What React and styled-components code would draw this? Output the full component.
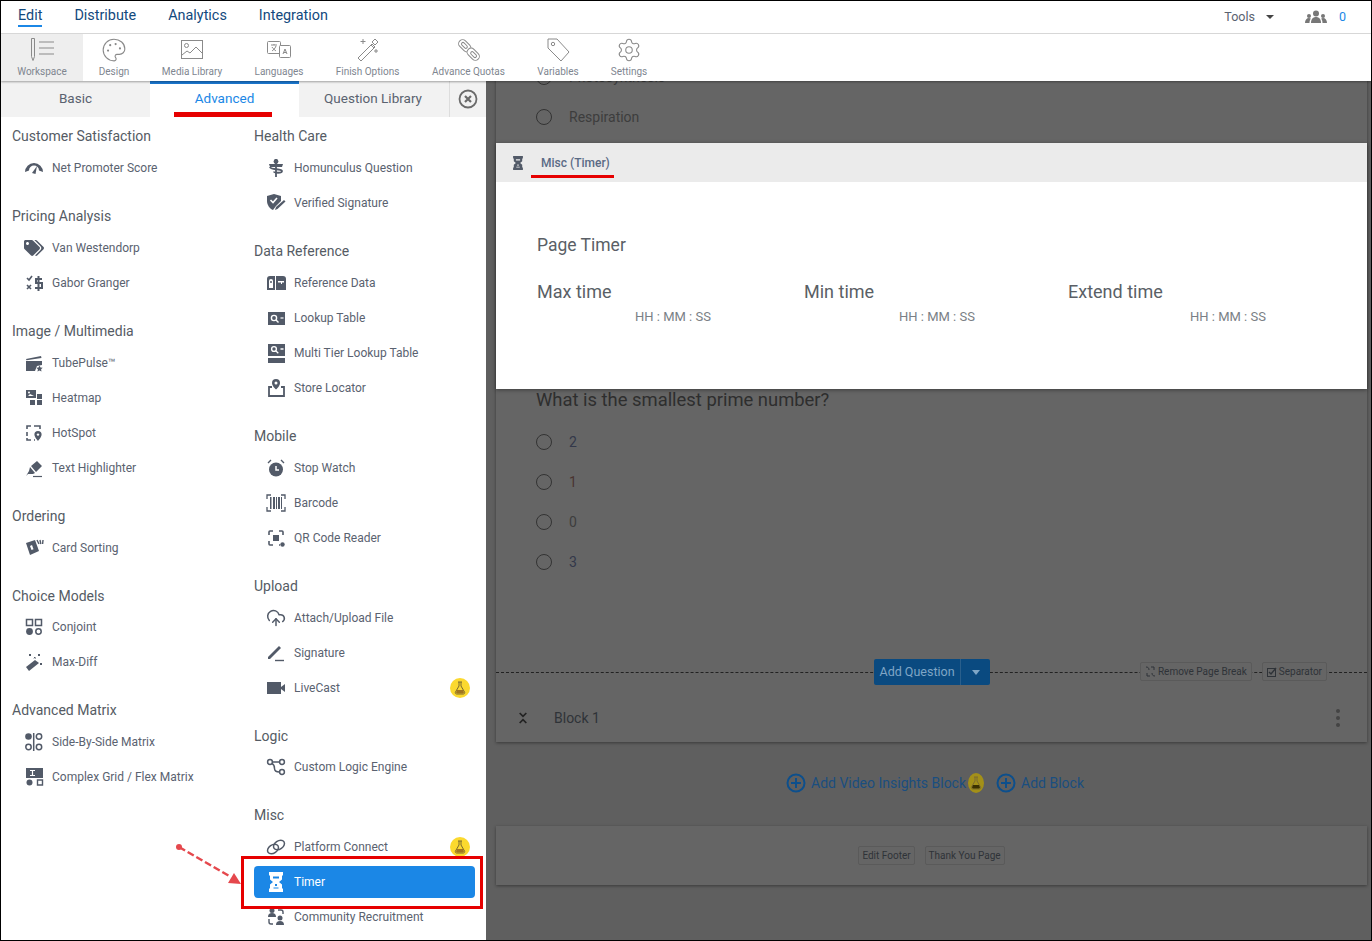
import React from "react";
import styled, { createGlobalStyle } from "styled-components";
import { Palette, Settings, CloudUpload } from "lucide-react";
import { FaTags } from "react-icons/fa";

const GlobalStyle = createGlobalStyle`
  html, body { margin: 0; padding: 0; height: 100%; background: #fff; }
  * { box-sizing: border-box; }
  body { font-family: Roboto, "Open Sans", sans-serif; }
`;

const Frame = styled.div`
  width: 1372px;
  height: 941px;
  border: 1px solid #000;
  display: flex;
  flex-direction: column;
  overflow: hidden;
`;

const TopBar = styled.div`
  height: 33px;
  flex: none;
  display: flex;
  align-items: center;
  padding: 0 25px 4px 17px;
  border-bottom: 1px solid #ddd;
`;

const NavLink = styled.a`
  position: relative;
  font-size: 14.4px;
  color: #12497d;
  margin-right: 32px;
  ${(p) => p.$active && `
    &::after {
      content: "";
      position: absolute;
      left: 0;
      right: 0;
      bottom: -3px;
      height: 2px;
      background: #1b87e6;
    }
  `}
`;

const TopRight = styled.div`
  margin-left: auto;
  display: flex;
  align-items: center;
  padding-top: 3px;
  font-size: 12.5px;
  color: #5a6270;
`;

const Caret = styled.span`
  width: 0;
  height: 0;
  margin: 0 31px 0 11px;
  border-left: 4px solid transparent;
  border-right: 4px solid transparent;
  border-top: 4px solid #444;
`;

const Count = styled.span`
  margin-left: 12px;
  color: #1b87e6;
`;

const Toolbar = styled.div`
  height: 47px;
  flex: none;
  display: flex;
  position: relative;
  z-index: 2;
  background: #fff;
  box-shadow: 0 1px 2px rgba(0, 0, 0, 0.35);
`;

const ToolButton = styled.div`
  width: ${(p) => p.$w}px;
  display: flex;
  flex-direction: column;
  align-items: center;
  padding-top: 3px;
  font-size: 10px;
  line-height: 13px;
  color: #808690;
  white-space: nowrap;
  background: ${(p) => (p.$active ? "#eee" : "transparent")};
  svg { display: block; height: 26px; width: 26px; margin-bottom: 2px; }
`;

const Body = styled.div`
  flex: 1;
  min-height: 0;
  display: flex;
`;

const Sidebar = styled.aside`
  position: relative;
  width: 485px;
  flex: none;
  background: #fff;
  overflow: hidden;
`;

const Tabs = styled.div`
  height: 36px;
  display: flex;
  background: #f2f2f2;
`;

const Tab = styled.div`
  width: ${(p) => p.$w}px;
  display: flex;
  align-items: center;
  justify-content: center;
  padding-bottom: 6px;
  font-size: 13.5px;
  color: ${(p) => (p.$active ? "#1b87e6" : "#5a6270")};
  background: ${(p) => (p.$active ? "#fff" : "transparent")};
  border-top: 3px solid ${(p) => (p.$active ? "#1b78d0" : "transparent")};
`;

const CloseTab = styled.div`
  flex: 1;
  display: flex;
  align-items: center;
  justify-content: center;
  margin-left: 2px;
  border-left: 1px solid #ddd;
`;

const Columns = styled.div`
  display: grid;
  grid-template-columns: 221px 221px;
  column-gap: 21px;
  padding: 3px 0 0 11px;
`;

const Section = styled.section`
  padding-bottom: 13px;
`;

const Heading = styled.h3`
  margin: 0;
  height: ${(p) => (p.$tight ? 31 : 32)}px;
  line-height: 32px;
  font-size: 14px;
  font-weight: 400;
  color: #555b64;
`;

const Item = styled.div`
  height: 32px;
  margin-bottom: 3px;
  display: flex;
  align-items: center;
  padding: 0 5px 0 12px;
  border-radius: 4px;
  font-size: 12px;
  white-space: nowrap;
  color: ${(p) => (p.$active ? "#fff" : "#5a6270")};
  background: ${(p) => (p.$active ? "#1b87e6" : "transparent")};
  svg.ic { width: 20px; height: 20px; flex: none; margin-right: 8px; }
`;

const Badge = styled.span`
  margin-left: auto;
  width: 20px;
  height: 20px;
  border-radius: 50%;
  background: #fbd92f;
  display: flex;
  align-items: center;
  justify-content: center;
`;

const Highlight = styled.div`
  position: absolute;
  left: 240px;
  top: 775px;
  width: 242px;
  height: 53px;
  border: 3px solid #e60000;
`;

const TabUnderline = styled.div`
  position: absolute;
  left: 173px;
  top: 31px;
  width: 98px;
  height: 5px;
  background: #e60000;
`;

const ArrowMark = styled.svg`
  position: absolute;
  left: 170px;
  top: 755px;
`;

const Main = styled.main`
  position: relative;
  flex: 1;
  min-width: 0;
  overflow: hidden;
  background: #5f5f5f;
  padding: 0 4px 0 10px;
`;

const SurveyCard = styled.div`
  margin-top: -24px;
  height: 685px;
  background: #656565;
  box-shadow: 0 1px 3px rgba(0, 0, 0, 0.4);
`;

const Option = styled.div`
  height: 40px;
  display: flex;
  align-items: center;
  padding-left: 40px;
  font-size: 14px;
  color: ${(p) => p.$color || "#3d3d3d"};
`;

const Radio = styled.span`
  width: 16px;
  height: 16px;
  margin-right: 17px;
  border: 1px solid #333;
  border-radius: 50%;
`;

const Question = styled.h2`
  margin: 250px 0 9px;
  padding-left: 40px;
  height: 26px;
  line-height: 26px;
  font-size: 18.4px;
  font-weight: 400;
  color: #2e2e2e;
`;

const BreakRow = styled.div`
  position: relative;
  height: 26px;
  margin-top: 77px;
  display: flex;
  justify-content: center;
  &::before {
    content: "";
    position: absolute;
    left: 0;
    right: 0;
    top: 13px;
    border-top: 1px dashed #222;
  }
`;

const AddQuestion = styled.div`
  position: relative;
  width: 116px;
  display: flex;
  align-items: center;
  border-radius: 2px;
  background: #0a4a80;
  color: #7fa6c6;
  font-size: 12.5px;
`;

const AddLabel = styled.span`
  padding-left: 6px;
  width: 87px;
  height: 100%;
  line-height: 26px;
  border-right: 1px solid #2a5f8c;
`;

const AddCaret = styled.span`
  margin-left: 11px;
  border-left: 4px solid transparent;
  border-right: 4px solid transparent;
  border-top: 5px solid #7fa6c6;
`;

const BreakTools = styled.div`
  position: absolute;
  right: 40px;
  top: 3px;
  display: flex;
  gap: 10px;
`;

const GhostButton = styled.span`
  height: 19px;
  display: flex;
  align-items: center;
  gap: 2px;
  padding: 0 ${(p) => (p.$small ? 3 : 4)}px;
  background: #656565;
  border: 1px solid #5a5a5a;
  border-radius: 2px;
  font-size: 10px;
  color: #2f3338;
`;

const BlockRow = styled.div`
  height: 48px;
  margin-top: 9px;
  display: flex;
  align-items: center;
  padding: 0 27px 0 22px;
  font-size: 14px;
  color: #2f3338;
`;

const BlockTitle = styled.span`
  margin-left: 26px;
`;

const Kebab = styled.span`
  margin-left: auto;
  display: flex;
  flex-direction: column;
  gap: 3px;
  i { width: 4px; height: 4px; border-radius: 50%; background: #444; }
`;

const AddRow = styled.div`
  height: 30px;
  margin-top: 26px;
  padding-left: 290px;
  display: flex;
  align-items: center;
  font-size: 14px;
  color: #1a4e80;
`;

const AddBlock = styled.span`
  display: flex;
  align-items: center;
  gap: 5px;
  margin-left: ${(p) => p.$ml || 0}px;
`;

const MiniBadge = styled(Badge)`
  margin-left: 2px;
  width: 16px;
  height: 20px;
  background: #a39018;
`;

const FooterCard = styled.div`
  height: 59px;
  margin-top: 28px;
  background: #656565;
  box-shadow: 0 1px 3px rgba(0, 0, 0, 0.4);
  display: flex;
  justify-content: center;
  align-items: center;
  gap: 10px;
`;

const TimerCard = styled.section`
  position: absolute;
  top: 62px;
  left: 10px;
  right: 4px;
  height: 246px;
  background: #fff;
  box-shadow: 0 1px 4px rgba(0, 0, 0, 0.4);
`;

const TimerHead = styled.header`
  position: relative;
  height: 39px;
  display: flex;
  align-items: center;
  padding-left: 15px;
  background: #ebebeb;
  font-size: 12px;
  font-weight: 500;
  color: #5a6a85;
  svg { width: 14px; height: 18px; margin-right: 16px; }
`;

const HeadUnderline = styled.div`
  position: absolute;
  left: 35px;
  bottom: 4px;
  width: 83px;
  height: 3px;
  background: #e60000;
`;

const TimerBody = styled.div`
  padding: 51px 0 0 41px;
`;

const PageTitle = styled.div`
  height: 24px;
  line-height: 24px;
  font-size: 17.5px;
  color: #5a5f66;
`;

const Fields = styled.div`
  margin-top: 23px;
  display: grid;
  grid-template-columns: 267px 264px 1fr;
`;

const FieldLabel = styled.div`
  height: 24px;
  line-height: 24px;
  font-size: 18px;
  color: #5a5f66;
`;

const FieldValue = styled.div`
  margin-top: 4px;
  height: 18px;
  line-height: 18px;
  padding-left: ${(p) => p.$indent}px;
  font-size: 13px;
  color: #7a7f86;
`;

const D = "#525a68";

const icons = {
  gauge: (<><path d="M1 14a9 9 0 0 1 18 0l-4-1.500a5 5 0 0 0-10 0z" fill={D} /><path d="M8 15l5-7-1.500 8z" fill={D} /></>),
  gabor: (<><path d="M3 5l2 2 3-4M3 12l4 4M7 12l-4 4" stroke={D} strokeWidth="1.600" fill="none" /><path d="M18 6h-6v4h6v5h-7M14.500 3v15" stroke={D} strokeWidth="2" fill="none" /></>),
  clapper: (<><path d="M2 8h16v4l-5 1-2 5H2z" fill={D} /><path d="M2 6l15-3 .5 2-15 2.200z" fill={D} /><path d="M15.500 12.500l1 2 2.200.3-1.600 1.500.4 2.200-2-1-2 1 .4-2.200-1.600-1.500 2.200-.3z" fill={D} /></>),
  heatmap: (<><path d="M2 2h10v8H2z" fill={D} /><path d="M4 8l2-2 2 1 2 1H4z" fill="#fff" /><circle cx="5" cy="4.500" r="1" fill="#fff" /><path d="M13 6h5v5h-5zM6 12h5v5H6zM13 12h5v5h-5z" fill={D} /></>),
  hotspot: (<><path d="M3 6V3h4M10 3h6v3M3 9v4M3 15v2h4M10 17h1" stroke={D} strokeWidth="1.600" fill="none" /><path d="M14 8a3.600 3.600 0 0 1 3.600 3.600c0 2.600-3.600 6.400-3.600 6.400s-3.600-3.800-3.600-6.400A3.600 3.600 0 0 1 14 8z" fill={D} /><circle cx="14" cy="11.600" r="1.200" fill="#fff" /></>),
  highlight: (<><path d="M7 8l6-5 5 5-6 6zM6 9l5 6-2 1H4l-2 2 3-5z" fill={D} /><path d="M9 18.500h9" stroke={D} strokeWidth="1.200" /></>),
  cards: (<><path d="M2 5l9-3 4 11-9 4z" fill={D} /><path d="M8 7l-2 1 1.500 4 2-.8z" fill="#fff" /><path d="M13 2l2 4M16 2l.8 4M19 2l-.4 4" stroke={D} strokeWidth="1.400" /></>),
  conjoint: (<><path d="M2.500 2.500h6v6h-6zM11.500 2.500h6v6h-6z" stroke={D} strokeWidth="1.500" fill="none" /><circle cx="5.500" cy="14.500" r="3.400" fill={D} /><circle cx="14.500" cy="14.500" r="2.700" stroke={D} strokeWidth="1.500" fill="none" /></>),
  maxdiff: (<><path d="M2 15l9-7 4 3-10 8z" fill={D} /><path d="M5 2l2 2M7 2L5 4M14 2l2 2M16 2l-2 2M16 11l2 2M18 11l-2 2M10 5l1.500 1.500M11.500 5L10 6.500" stroke={D} strokeWidth="1" /></>),
  sidebyside: (<><circle cx="4.500" cy="4.500" r="3.300" fill={D} /><circle cx="15" cy="4.500" r="2.700" stroke={D} strokeWidth="1.500" fill="none" /><circle cx="4.500" cy="15" r="2.700" stroke={D} strokeWidth="1.500" fill="none" /><circle cx="15" cy="15" r="2.700" stroke={D} strokeWidth="1.500" fill="none" /><path d="M9.700 1v18" stroke={D} strokeWidth="1.500" /></>),
  grid: (<><path d="M2 1h17v10H2z" fill={D} /><path d="M6 3.500h5M6 8.500h5M8.500 3.500v5" stroke="#fff" strokeWidth="1.200" /><circle cx="5.500" cy="15.500" r="3" fill={D} /><path d="M13.500 13h5v5h-5z" stroke={D} strokeWidth="1.400" fill="none" /></>),
  caduceus: (<><path d="M10 1v18" stroke={D} strokeWidth="1.800" /><path d="M3 6h14l-1 3H4z" fill={D} /><path d="M4 9c0 3 12 1.500 12 4s-8 2-8 .5" stroke={D} strokeWidth="1.800" fill="none" /><circle cx="10" cy="3.500" r="2.400" fill={D} /></>),
  shieldpen: (<><path d="M1 3l7-2 7 2v5l-5 5-3 4C4 16 1 12 1 8z" fill={D} /><path d="M4.500 7l2.500 2.500L11 5" stroke="#fff" strokeWidth="1.600" fill="none" /><path d="M9 17l1-3 8-7 1.500 1.500-8 7.500z" fill={D} /></>),
  refdata: (<><path d="M1 17V6a3 3 0 0 1 3-3h5v14z" fill={D} /><path d="M10 3h7a3 3 0 0 1 3 3v11H10z" fill={D} /><path d="M3 15V8a2 2 0 0 1 4 0v7z" fill="#fff" /><circle cx="5" cy="9" r="1" fill={D} /><path d="M12 8h6v1.500h-2V11h-1V9.500h-3z" fill="#fff" /></>),
  lookup: (<><path d="M2 4h17v13H2z" fill={D} /><circle cx="8" cy="10" r="2.600" stroke="#fff" strokeWidth="1.400" fill="none" /><path d="M10 12l2.500 2.500" stroke="#fff" strokeWidth="1.400" /><path d="M14.500 10h3" stroke="#fff" strokeWidth="1.200" /></>),
  multi: (<><path d="M2 1h17v12H2z" fill={D} /><circle cx="8" cy="6" r="2.400" stroke="#fff" strokeWidth="1.400" fill="none" /><path d="M10 8l2.300 2.300M14.500 6h3" stroke="#fff" strokeWidth="1.300" /><path d="M2 15h17v5H2z" fill={D} /></>),
  locator: (<><path d="M10 1a4 4 0 0 1 4 4c0 3-4 6.500-4 6.500S6 8 6 5a4 4 0 0 1 4-4z" fill={D} /><circle cx="10" cy="5" r="1.500" fill="#fff" /><path d="M6 9H3v9h15V9h-3" stroke={D} strokeWidth="1.800" fill="none" /></>),
  alarm: (<><circle cx="10" cy="11.500" r="7" fill={D} /><path d="M10 8v4h3" stroke="#fff" strokeWidth="1.500" fill="none" /><path d="M2 5l3-3M18 5l-3-3" stroke={D} strokeWidth="1.400" /></>),
  barcode: (<><path d="M1 6V2h4M15 2h4v4M1 14v4h4M15 18h4v-4" stroke={D} strokeWidth="1.300" fill="none" /><path d="M4 4h1.500v12H4zM7 4h2v12H7zM10 4h1v12h-1zM12 4h2v12h-2zM15 4h1v12h-1z" fill={D} /></>),
  qr: (<><path d="M3 7V4a1 1 0 0 1 1-1h3M13 3h3a1 1 0 0 1 1 1v3M3 13v3a1 1 0 0 0 1 1h3M13 17h1" stroke={D} strokeWidth="1.600" fill="none" /><path d="M7 7h6v6H7z" fill={D} /><circle cx="16.500" cy="16.500" r="2.200" fill={D} /></>),
  pen: (<><path d="M2 14L13 3l2 2L4 16H2z" fill={D} /><path d="M9 17.500h9" stroke={D} strokeWidth="1.400" /></>),
  video: (<><path d="M1 4h14v12H1z" fill={D} /><path d="M15 9l4-3v8l-4-3z" fill={D} /></>),
  nodes: (<><circle cx="4" cy="5" r="2.400" stroke={D} strokeWidth="1.500" fill="none" /><circle cx="16" cy="5" r="2.400" stroke={D} strokeWidth="1.500" fill="none" /><circle cx="16" cy="15" r="2.400" stroke={D} strokeWidth="1.500" fill="none" /><path d="M6.500 5h7M6 6.500c2 1 2.500 3 2.500 5s2 3.500 5 3.500" stroke={D} strokeWidth="1.500" fill="none" /></>),
  link: (<><ellipse cx="7" cy="12" rx="6" ry="4.200" transform="rotate(-35 7 12)" stroke={D} strokeWidth="1.500" fill="none" /><ellipse cx="13" cy="8" rx="6" ry="4.200" transform="rotate(-35 13 8)" stroke={D} strokeWidth="1.500" fill="none" /></>),
  community: (<><circle cx="6" cy="3.500" r="2.500" fill={D} /><path d="M2 10a4 4 0 0 1 8 0z" fill={D} /><circle cx="14" cy="11" r="2.500" fill={D} /><path d="M10 18a4 4 0 0 1 8 0z" fill={D} /><path d="M12 3h3a2 2 0 0 1 2 2v2M3 12v3a2 2 0 0 0 2 2h2" stroke={D} strokeWidth="1.400" fill="none" /></>),
};

const Glyph = ({ name }) => (
  <svg className="ic" viewBox="0 0 20 20">{icons[name]}</svg>
);

const Hourglass = ({ color, inner }) => (
  <svg className="ic" viewBox="0 0 20 20">
    <path d="M3 0h14v3.500h-1v4L13 10l3 2.500v4h1V20H3v-3.500h1v-4L7 10 4 7.500v-4H3z" fill={color} />
    <path d="M7 4.500h6v2h-6zM9 12h2v2H9zM7.500 15.500h5v1h-5z" fill={inner} />
  </svg>
);

const Flask = ({ body = "#a0741f" }) => (
  <svg width="12" height="14" viewBox="0 0 12 14">
    <path d="M4 1h4M5 1v4L1.500 11a1.300 1.300 0 0 0 1 2h7a1.300 1.300 0 0 0 1-2L7 5V1" stroke="#7a6a30" strokeWidth="1" fill="none" />
    <path d="M3 9h6l1 2.500-.8 1H2.800L2 11.500z" fill={body} />
  </svg>
);

const Team = () => (
  <svg width="22" height="14" viewBox="0 0 22 14" fill="#777">
    <circle cx="11" cy="3.500" r="3" /><path d="M6 13c0-4 2-6 5-6s5 2 5 6z" />
    <circle cx="4" cy="6" r="2" /><path d="M0 13c0-3 1.500-5 4-5 .8 0 1.300.2 1.800.5C4.800 10 4.500 11.500 4.500 13z" />
    <circle cx="18" cy="6" r="2" /><path d="M22 13c0-3-1.500-5-4-5-.8 0-1.300.2-1.800.5 1 1.500 1.300 3 1.300 4.500z" />
  </svg>
);

const tools = [
  { label: "Workspace", w: 82, active: true, icon: (
    <svg viewBox="0 0 26 26" fill="none" stroke="#8a8a8a"><path d="M1.500 1.500h3v18l-1.500 4-1.500-4z" transform="translate(1 0)" /><path d="M10 5h15M10 11h15M10 17h15" /></svg>
  ) },
  { label: "Design", w: 62, icon: <Palette color="#8a8a8a" strokeWidth={1} /> },
  { label: "Media Library", w: 94, icon: (
    <svg viewBox="0 0 26 26" fill="none" stroke="#8a8a8a"><rect x="2.500" y="3.500" width="21" height="18" /><circle cx="7.500" cy="8.500" r="2" /><path d="M3 18l5-4 3 2 6-6 6 6" /></svg>
  ) },
  { label: "Languages", w: 80, icon: (
    <svg viewBox="0 0 26 26" fill="none" stroke="#8a8a8a"><rect x="1.500" y="4.500" width="13" height="12" rx="1" /><rect x="13.500" y="8.500" width="11" height="12" rx="1" fill="#fff" /><path d="M5 8h6M8 7v1M10 9c-1 3-3 4-4 5M6 10c1 2 3 3 4 4M17 17l2-5 2 5M18 15.500h2" /></svg>
  ) },
  { label: "Finish Options", w: 97, icon: (
    <svg viewBox="0 0 26 26" fill="none" stroke="#8a8a8a"><path d="M3 21l14-14 3 3L6 24z" /><path d="M16 8l3 3M20 2l3 3-3 3-3-3zM8 2v5M5.500 4.500h5M21 12v4M19 14h4" /></svg>
  ) },
  { label: "Advance Quotas", w: 105, icon: (
    <svg viewBox="0 0 26 26" fill="none" stroke="#8a8a8a">
      <g transform="rotate(-45 13 13)">
        <rect x="9" y="0" width="8" height="14" rx="4" />
        <rect x="11.500" y="3" width="3" height="7" rx="1.500" />
        <rect x="9" y="12" width="8" height="14" rx="4" fill="#fff" />
        <rect x="11.500" y="16" width="3" height="7" rx="1.500" />
      </g>
    </svg>
  ) },
  { label: "Variables", w: 74, icon: (
    <svg viewBox="0 0 26 26" fill="none" stroke="#8a8a8a"><path d="M3 2h9l12 13-8 9L3 11z" /><circle cx="8" cy="7" r="1.700" /></svg>
  ) },
  { label: "Settings", w: 68, icon: <Settings color="#8a8a8a" strokeWidth={1} /> },
];

const leftColumn = [
  { title: "Customer Satisfaction", items: [["gauge", "Net Promoter Score"]] },
  { title: "Pricing Analysis", items: [["tags", "Van Westendorp"], ["gabor", "Gabor Granger"]] },
  { title: "Image / Multimedia", items: [["clapper", "TubePulse™"], ["heatmap", "Heatmap"], ["hotspot", "HotSpot"], ["highlight", "Text Highlighter"]] },
  { title: "Ordering", items: [["cards", "Card Sorting"]] },
  { title: "Choice Models", tight: true, items: [["conjoint", "Conjoint"], ["maxdiff", "Max-Diff"]] },
  { title: "Advanced Matrix", items: [["sidebyside", "Side-By-Side Matrix"], ["grid", "Complex Grid / Flex Matrix"]] },
];

const rightColumn = [
  { title: "Health Care", items: [["caduceus", "Homunculus Question"], ["shieldpen", "Verified Signature"]] },
  { title: "Data Reference", items: [["refdata", "Reference Data"], ["lookup", "Lookup Table"], ["multi", "Multi Tier Lookup Table"], ["locator", "Store Locator"]] },
  { title: "Mobile", items: [["alarm", "Stop Watch"], ["barcode", "Barcode"], ["qr", "QR Code Reader"]] },
  { title: "Upload", items: [["upload", "Attach/Upload File"], ["pen", "Signature"], ["video", "LiveCast", "badge"]] },
  { title: "Logic", tight: true, items: [["nodes", "Custom Logic Engine"]] },
  { title: "Misc", items: [["link", "Platform Connect", "badge"], ["timer", "Timer", "active"], ["community", "Community Recruitment"]] },
];

const ItemIcon = ({ name }) => {
  if (name === "tags") return <FaTags className="ic" color={D} />;
  if (name === "upload") return <CloudUpload className="ic" color={D} strokeWidth={1.8} />;
  if (name === "timer") return <Hourglass color="#fff" inner="#1b87e6" />;
  return <Glyph name={name} />;
};

const Column = ({ sections }) => (
  <div>
    {sections.map((s) => (
      <Section key={s.title}>
        <Heading $tight={s.tight}>{s.title}</Heading>
        {s.items.map(([icon, label, flag]) => (
          <Item key={label} $active={flag === "active"}>
            <ItemIcon name={icon} />
            {label}
            {flag === "badge" && <Badge><Flask /></Badge>}
          </Item>
        ))}
      </Section>
    ))}
  </div>
);

const PlusCircle = () => (
  <svg width="20" height="20" viewBox="0 0 20 20" fill="none" stroke="#0d4f8c" strokeWidth="2">
    <circle cx="10" cy="10" r="8.500" /><path d="M10 5v10M5 10h10" />
  </svg>
);

const BrokenLink = () => (
  <svg width="11" height="11" viewBox="0 0 11 11" fill="none" stroke="#2f3338">
    <path d="M1 1c2 0 3 1 3 3M10 10c-2 0-3-1-3-3M6 1h3v3M2 7v3h3" />
  </svg>
);

const CheckBox = () => (
  <svg width="10" height="10" viewBox="0 0 10 10" fill="none" stroke="#2f3338">
    <rect x="0.500" y="1.500" width="8" height="8" /><path d="M2 5l2 2 5-6" strokeWidth="1.400" />
  </svg>
);

const fields = [
  { label: "Max time", indent: 98 },
  { label: "Min time", indent: 95 },
  { label: "Extend time", indent: 122 },
];

export default function App() {
  return (
    <>
      <GlobalStyle />
      <Frame>
        <TopBar>
          <NavLink $active>Edit</NavLink>
          <NavLink>Distribute</NavLink>
          <NavLink>Analytics</NavLink>
          <NavLink>Integration</NavLink>
          <TopRight>
            Tools
            <Caret />
            <Team />
            <Count>0</Count>
          </TopRight>
        </TopBar>

        <Toolbar>
          {tools.map((t) => (
            <ToolButton key={t.label} $w={t.w} $active={t.active}>
              {t.icon}
              {t.label}
            </ToolButton>
          ))}
        </Toolbar>

        <Body>
          <Sidebar>
            <Tabs>
              <Tab $w={149}>Basic</Tab>
              <Tab $w={149} $active>Advanced</Tab>
              <Tab $w={148}>Question Library</Tab>
              <CloseTab>
                <svg width="20" height="20" viewBox="0 0 20 20" fill="none" stroke="#6b6b6b" strokeWidth="1.800">
                  <circle cx="10" cy="10" r="8.500" /><path d="M7 7l6 6M13 7l-6 6" strokeWidth="2.200" />
                </svg>
              </CloseTab>
            </Tabs>
            <Columns>
              <Column sections={leftColumn} />
              <Column sections={rightColumn} />
            </Columns>
            <TabUnderline />
            <ArrowMark width="72" height="50" viewBox="0 0 72 50" fill="none">
              <circle cx="8" cy="11" r="3" fill="#e5484d" />
              <path d="M8 11l52 30" stroke="#e5484d" strokeWidth="2.500" strokeDasharray="7 3" />
              <path d="M70 48l-13-1 6-10z" fill="#e5484d" />
            </ArrowMark>
            <Highlight />
          </Sidebar>

          <Main>
            <SurveyCard>
              <Option><Radio />Photosynthesis</Option>
              <Option><Radio />Respiration</Option>
              <Question>What is the smallest prime number?</Question>
              <Option $color="#33384a"><Radio />2</Option>
              <Option $color="#4a3430"><Radio />1</Option>
              <Option $color="#3d3d3d"><Radio />0</Option>
              <Option $color="#33384a"><Radio />3</Option>
              <BreakRow>
                <AddQuestion>
                  <AddLabel>Add Question</AddLabel>
                  <AddCaret />
                </AddQuestion>
                <BreakTools>
                  <GhostButton><BrokenLink />Remove Page Break</GhostButton>
                  <GhostButton><CheckBox />Separator</GhostButton>
                </BreakTools>
              </BreakRow>
              <BlockRow>
                <svg width="10" height="14" viewBox="0 0 12 16" fill="none" stroke="#222" strokeWidth="2">
                  <path d="M2 2l4 4 4-4M2 14l4-4 4 4" />
                </svg>
                <BlockTitle>Block 1</BlockTitle>
                <Kebab><i /><i /><i /></Kebab>
              </BlockRow>
            </SurveyCard>

            <AddRow>
              <AddBlock>
                <PlusCircle />
                Add Video Insights Block
              </AddBlock>
              <MiniBadge><Flask body="#3a3000" /></MiniBadge>
              <AddBlock $ml={12}>
                <PlusCircle />
                Add Block
              </AddBlock>
            </AddRow>

            <FooterCard>
              <GhostButton $small>Edit Footer</GhostButton>
              <GhostButton $small>Thank You Page</GhostButton>
            </FooterCard>

            <TimerCard>
              <TimerHead>
                <Hourglass color="#525a68" inner="#ebebeb" />
                Misc (Timer)
                <HeadUnderline />
              </TimerHead>
              <TimerBody>
                <PageTitle>Page Timer</PageTitle>
                <Fields>
                  {fields.map((f) => (
                    <div key={f.label}>
                      <FieldLabel>{f.label}</FieldLabel>
                      <FieldValue $indent={f.indent}>HH : MM : SS</FieldValue>
                    </div>
                  ))}
                </Fields>
              </TimerBody>
            </TimerCard>
          </Main>
        </Body>
      </Frame>
    </>
  );
}
